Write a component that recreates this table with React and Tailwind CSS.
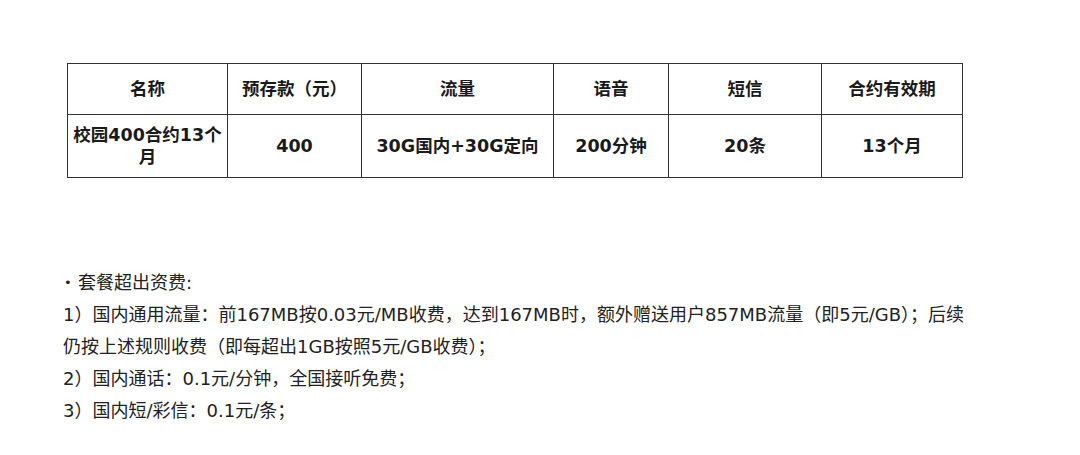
import React from 'react';

const cols = [
  { head: '名称', w: 'w-[160px]' },
  { head: '预存款（元）', w: 'w-[134px]' },
  { head: '流量', w: 'w-[192px]' },
  { head: '语音', w: 'w-[115px]' },
  { head: '短信', w: 'w-[153px]' },
  { head: '合约有效期', w: 'w-[141px]' },
];

const row = [
  <>校园400合约13个<br />月</>,
  '400',
  '30G国内+30G定向',
  '200分钟',
  '20条',
  '13个月',
];

const notes = [
  '1）国内通用流量：前167MB按0.03元/MB收费，达到167MB时，额外赠送用户857MB流量（即5元/GB）；后续',
  '仍按上述规则收费（即每超出1GB按照5元/GB收费）；',
  '2）国内通话：0.1元/分钟，全国接听免费；',
  '3）国内短/彩信：0.1元/条；',
];

export default function App() {
  return (
    <div
      className="w-[1080px] h-[455px] bg-white text-[#1a1a1a] overflow-hidden"
      style={{ fontFamily: '"DejaVu Sans", "Noto Sans CJK SC", sans-serif' }}
    >
      <div className="pl-[67px] pt-[63px]">
        <table className="border-collapse table-fixed text-[17.5px] font-bold">
          <thead>
            <tr className="h-[51px]">
              {cols.map((c) => (
                <th key={c.head} className={`${c.w} border border-[#333] text-center font-bold`}>
                  {c.head}
                </th>
              ))}
            </tr>
          </thead>
          <tbody>
            <tr className="h-[63px]">
              {row.map((v, i) => (
                <td key={i} className="border border-[#333] text-center leading-[22px] px-0">
                  {v}
                </td>
              ))}
            </tr>
          </tbody>
        </table>
      </div>

      <div className="pl-[63px] pt-[89px] text-[18px] leading-[32px] text-[#222]">
        <div className="flex items-center">
          <span className="w-[15px] pl-[1px] text-left text-[13px]">•</span>
          <span>套餐超出资费:</span>
        </div>
        {notes.map((n) => (
          <div key={n} className="whitespace-nowrap">{n}</div>
        ))}
      </div>
    </div>
  );
}
